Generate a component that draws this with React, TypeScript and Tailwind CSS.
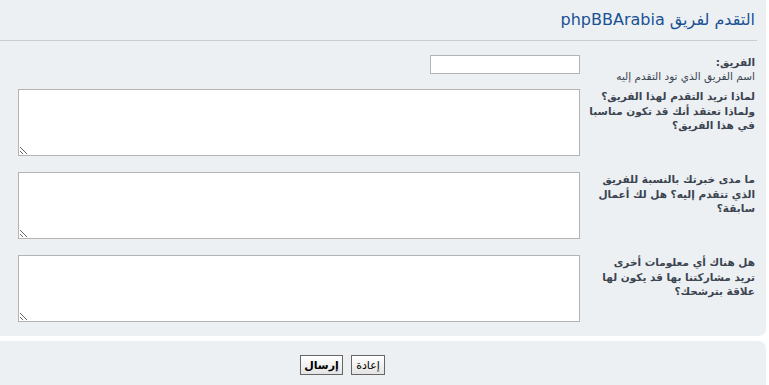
import React from 'react';

const rows = [
  ['لماذا تريد التقدم لهذا الفريق؟', 'ولماذا تعتقد أنك قد تكون مناسبا', 'في هذا الفريق؟'],
  ['ما مدى خبرتك بالنسبة للفريق', 'الذي تتقدم إليه؟ هل لك أعمال', 'سابقة؟'],
  ['هل هناك أي معلومات أخرى', 'تريد مشاركتنا بها قد يكون لها', 'علاقة بترشحك؟'],
];

export default function App() {
  return (
    <div className="w-[769px] h-[385px] bg-white overflow-hidden font-['DejaVu_Sans',sans-serif] text-[10.5px] text-[#3b4450]">
      <div dir="rtl" className="w-[766px] h-[336px] bg-[#ecf0f3] rounded-br-[7px] pt-[10px] pr-[9px]">
        <h2 className="text-[16px] leading-[20px] font-normal text-[#1a5193] pr-[2px] pb-[10px] border-b border-[#cccccc]">
          التقدم لفريق phpBBArabia
        </h2>
        <div className="pr-[2px] pt-[13px]">
          <div className="flex items-start">
            <div className="w-[164px] shrink-0 leading-[14px] pt-[1px]">
              <div className="font-bold">الفريق:</div>
              <div>اسم الفريق الذي تود التقدم إليه</div>
            </div>
            <div className="pr-[11px] pt-[1px]">
              <input type="text" className="w-[150px] h-[19px] bg-white border border-[#b4b4b4] outline-none" />
            </div>
          </div>
          {rows.map((q, i) => (
            <div key={i} className={`flex items-start ${i === 0 ? 'mt-[6px]' : 'mt-[16px]'}`}>
              <div className="w-[164px] shrink-0 font-bold leading-[14.5px] whitespace-nowrap">
                {q.map((l, j) => (
                  <div key={j}>{l}</div>
                ))}
              </div>
              <div className="pr-[11px]">
                <textarea className="block w-[562px] h-[67px] bg-white border border-[#b4b4b4] outline-none resize" />
              </div>
            </div>
          ))}
        </div>
      </div>
      <div className="w-[766px] h-[60px] mt-[5px] bg-[#ecf0f3] rounded-tr-[7px] flex justify-start pt-[14px] pl-[300px]">
        <div className="flex gap-[8px] items-start">
          <button className="h-[20px] w-[43px] border border-[#666] bg-gradient-to-b from-white to-[#e4e4e4] text-[11px] text-black font-bold leading-none">
            إرسال
          </button>
          <button className="h-[20px] w-[34px] border border-[#666] bg-gradient-to-b from-white to-[#e4e4e4] text-[11px] text-black font-normal leading-none">
            إعادة
          </button>
        </div>
      </div>
    </div>
  );
}
